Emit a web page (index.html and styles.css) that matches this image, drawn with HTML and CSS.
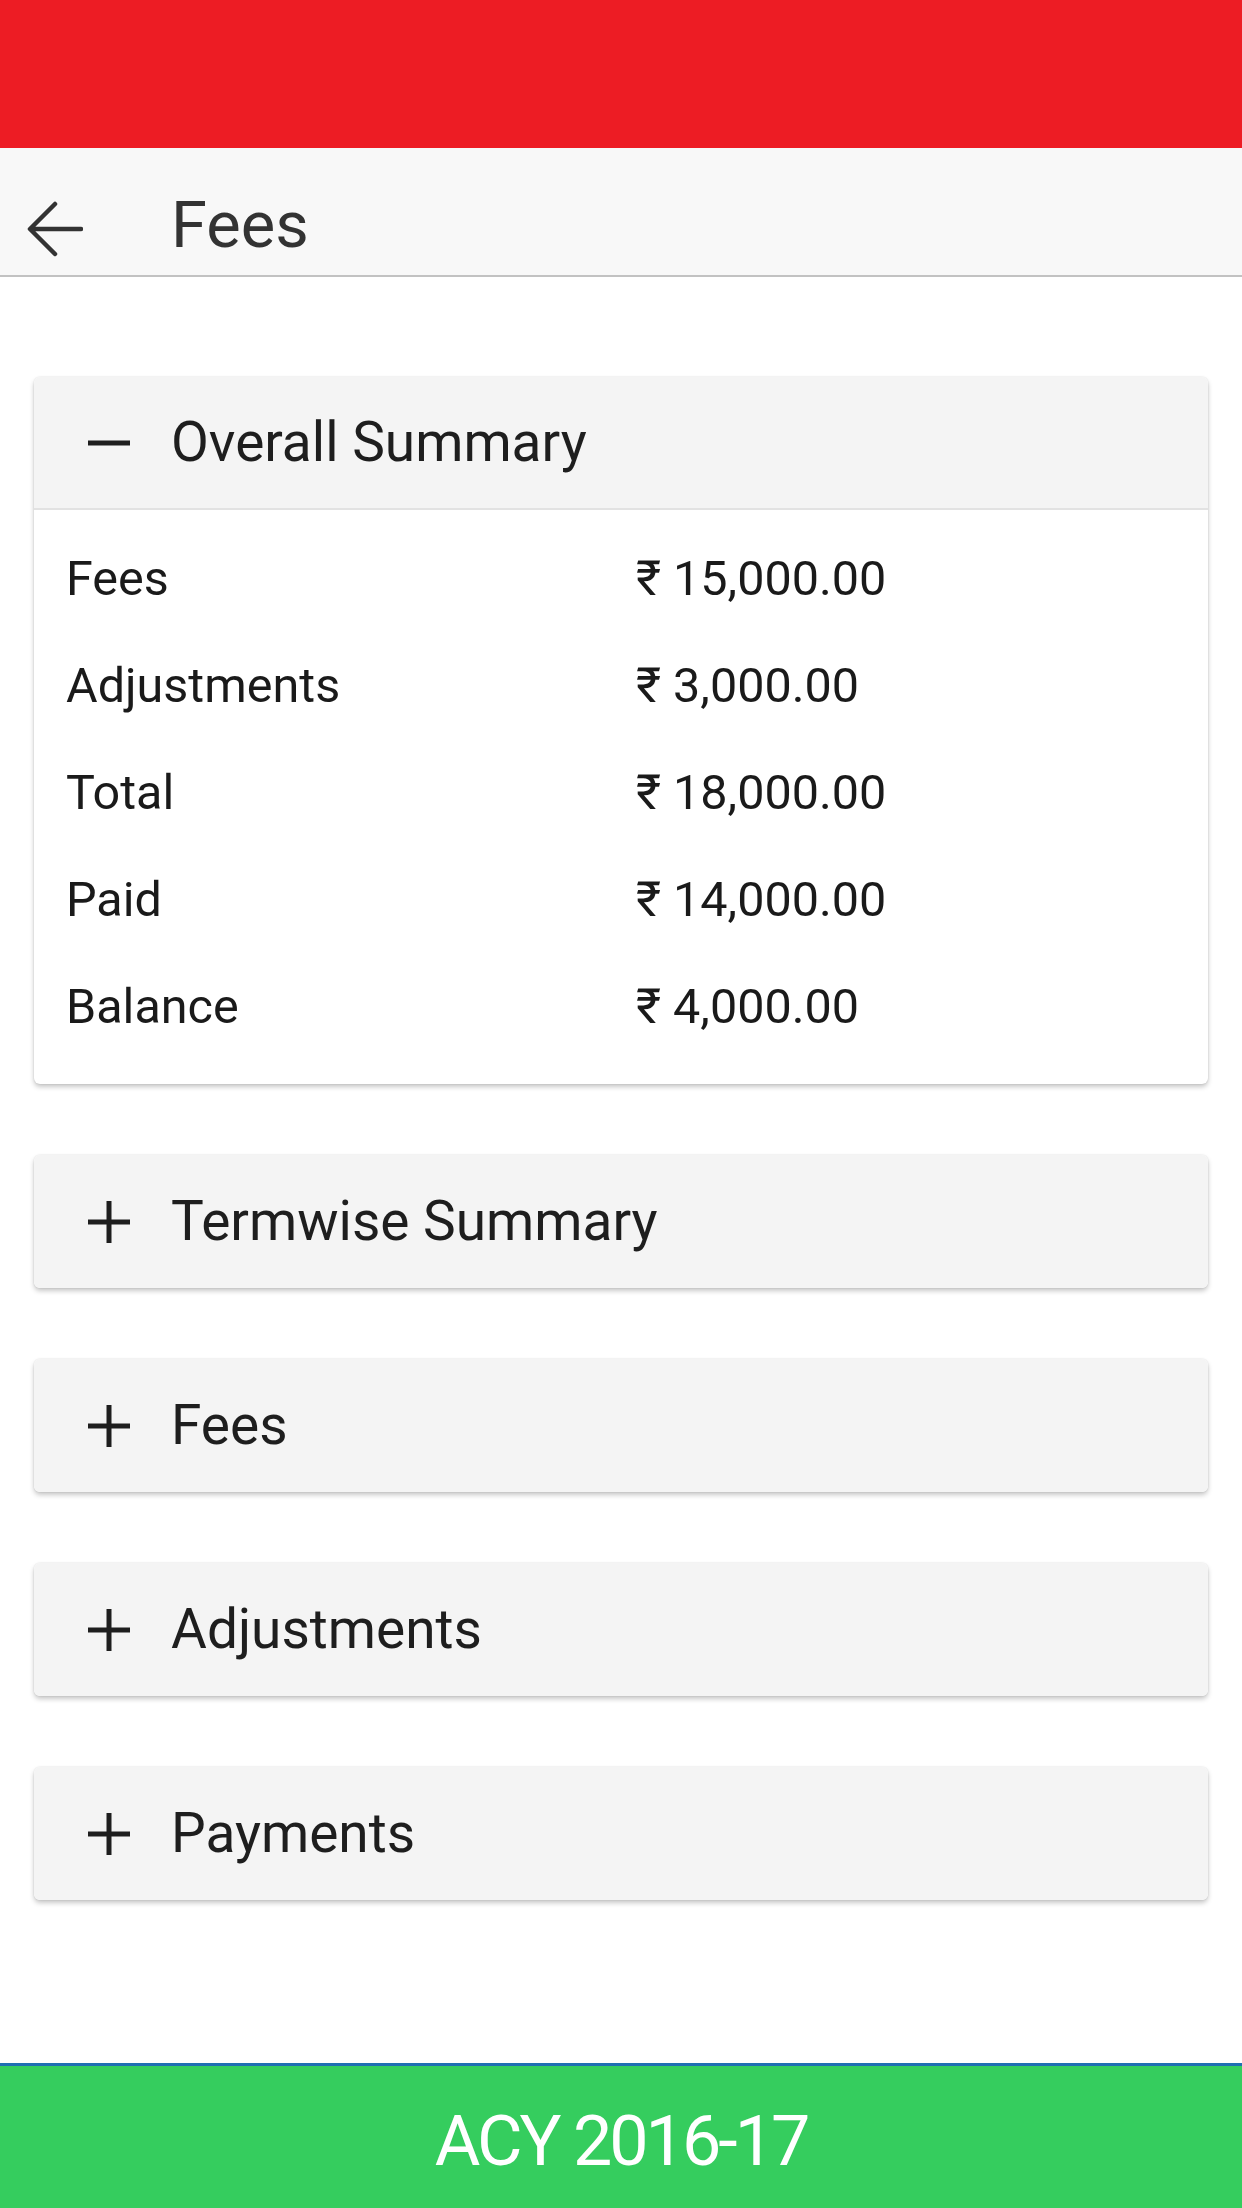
FILE: index.html
```html
<!DOCTYPE html>
<html lang="en">
<head>
<meta charset="utf-8">
<title>Fees</title>
<link rel="stylesheet" href="styles.css">
</head>
<body>
<div class="statusbar"></div>
<header class="toolbar">
  <svg class="back" viewBox="0 0 56 56" width="56" height="56" aria-hidden="true">
    <path d="M54 28H4M28 3L3 28L28 53" fill="none" stroke="#333" stroke-width="4.5" stroke-linecap="round" stroke-linejoin="round"/>
  </svg>
  <h1 class="title">Fees</h1>
</header>
<main class="content">
  <section class="card">
    <div class="card-head open">
      <svg class="icon" viewBox="0 0 44 44" width="44" height="44" aria-hidden="true"><path d="M1 22H43" stroke="#1e1e1e" stroke-width="5"/></svg>
      <span class="card-title">Overall Summary</span>
    </div>
    <div class="card-body">
      <div class="row"><span class="label">Fees</span><span class="value">₹ 15,000.00</span></div>
      <div class="row"><span class="label">Adjustments</span><span class="value">₹ 3,000.00</span></div>
      <div class="row"><span class="label">Total</span><span class="value">₹ 18,000.00</span></div>
      <div class="row"><span class="label">Paid</span><span class="value">₹ 14,000.00</span></div>
      <div class="row"><span class="label">Balance</span><span class="value">₹ 4,000.00</span></div>
    </div>
  </section>
  <section class="card">
    <div class="card-head">
      <svg class="icon" viewBox="0 0 44 44" width="44" height="44" aria-hidden="true"><path d="M1 22H43M22 1V43" stroke="#1e1e1e" stroke-width="5"/></svg>
      <span class="card-title">Termwise Summary</span>
    </div>
  </section>
  <section class="card">
    <div class="card-head">
      <svg class="icon" viewBox="0 0 44 44" width="44" height="44" aria-hidden="true"><path d="M1 22H43M22 1V43" stroke="#1e1e1e" stroke-width="5"/></svg>
      <span class="card-title">Fees</span>
    </div>
  </section>
  <section class="card">
    <div class="card-head">
      <svg class="icon" viewBox="0 0 44 44" width="44" height="44" aria-hidden="true"><path d="M1 22H43M22 1V43" stroke="#1e1e1e" stroke-width="5"/></svg>
      <span class="card-title">Adjustments</span>
    </div>
  </section>
  <section class="card">
    <div class="card-head">
      <svg class="icon" viewBox="0 0 44 44" width="44" height="44" aria-hidden="true"><path d="M1 22H43M22 1V43" stroke="#1e1e1e" stroke-width="5"/></svg>
      <span class="card-title">Payments</span>
    </div>
  </section>
</main>
<footer class="footer">ACY 2016-17</footer>
</body>
</html>
```
FILE: styles.css
```css
* { box-sizing: border-box; }
html, body { margin: 0; padding: 0; }
body {
  width: 1242px;
  min-height: 2208px;
  display: flex;
  flex-direction: column;
  background: #ffffff;
  font-family: Roboto, "Noto Sans", "DejaVu Sans", sans-serif;
  color: #212121;
}
.statusbar {
  height: 148px;
  background: #ed1c24;
  flex: none;
}
.toolbar {
  height: 129px;
  flex: none;
  background: #f8f8f8;
  border-bottom: 2px solid #c2c2c2;
  display: flex;
  align-items: flex-start;
  padding-left: 27px;
  gap: 88px;
}
.back {
  flex: none;
  margin-top: 53px;
}
.title {
  margin: 45px 0 0;
  font-size: 65px;
  font-weight: 400;
  color: #333333;
  line-height: 1;
}
.content {
  padding: 100px 34px 0;
  display: flex;
  flex-direction: column;
  gap: 71px;
}
.card {
  background: #ffffff;
  border-radius: 6px;
  box-shadow: 0 3px 5px rgba(0,0,0,0.22), 0 0 2px rgba(0,0,0,0.12);
  overflow: hidden;
}
.card-head {
  height: 133px;
  background: #f4f4f4;
  display: flex;
  align-items: center;
  padding-left: 53px;
  gap: 40px;
}
.card-head.open {
  border-bottom: 2px solid #e2e2e2;
}
.icon { flex: none; }
.card-title {
  font-size: 55px;
  line-height: 1;
  color: #1e1e1e;
}
.card-body {
  padding: 15px 32px 24px;
}
.row {
  height: 107px;
  display: grid;
  grid-template-columns: 570px 1fr;
  align-items: center;
  font-size: 48.5px;
  color: #1a1a1a;
}
.footer {
  margin-top: auto;
  height: 145px;
  flex: none;
  background: #35cd5e;
  border-top: 3px solid #1f6fb2;
  color: #ffffff;
  font-size: 70px;
  letter-spacing: -3px;
  display: flex;
  align-items: center;
  justify-content: center;
  padding-top: 8px;
}
```
